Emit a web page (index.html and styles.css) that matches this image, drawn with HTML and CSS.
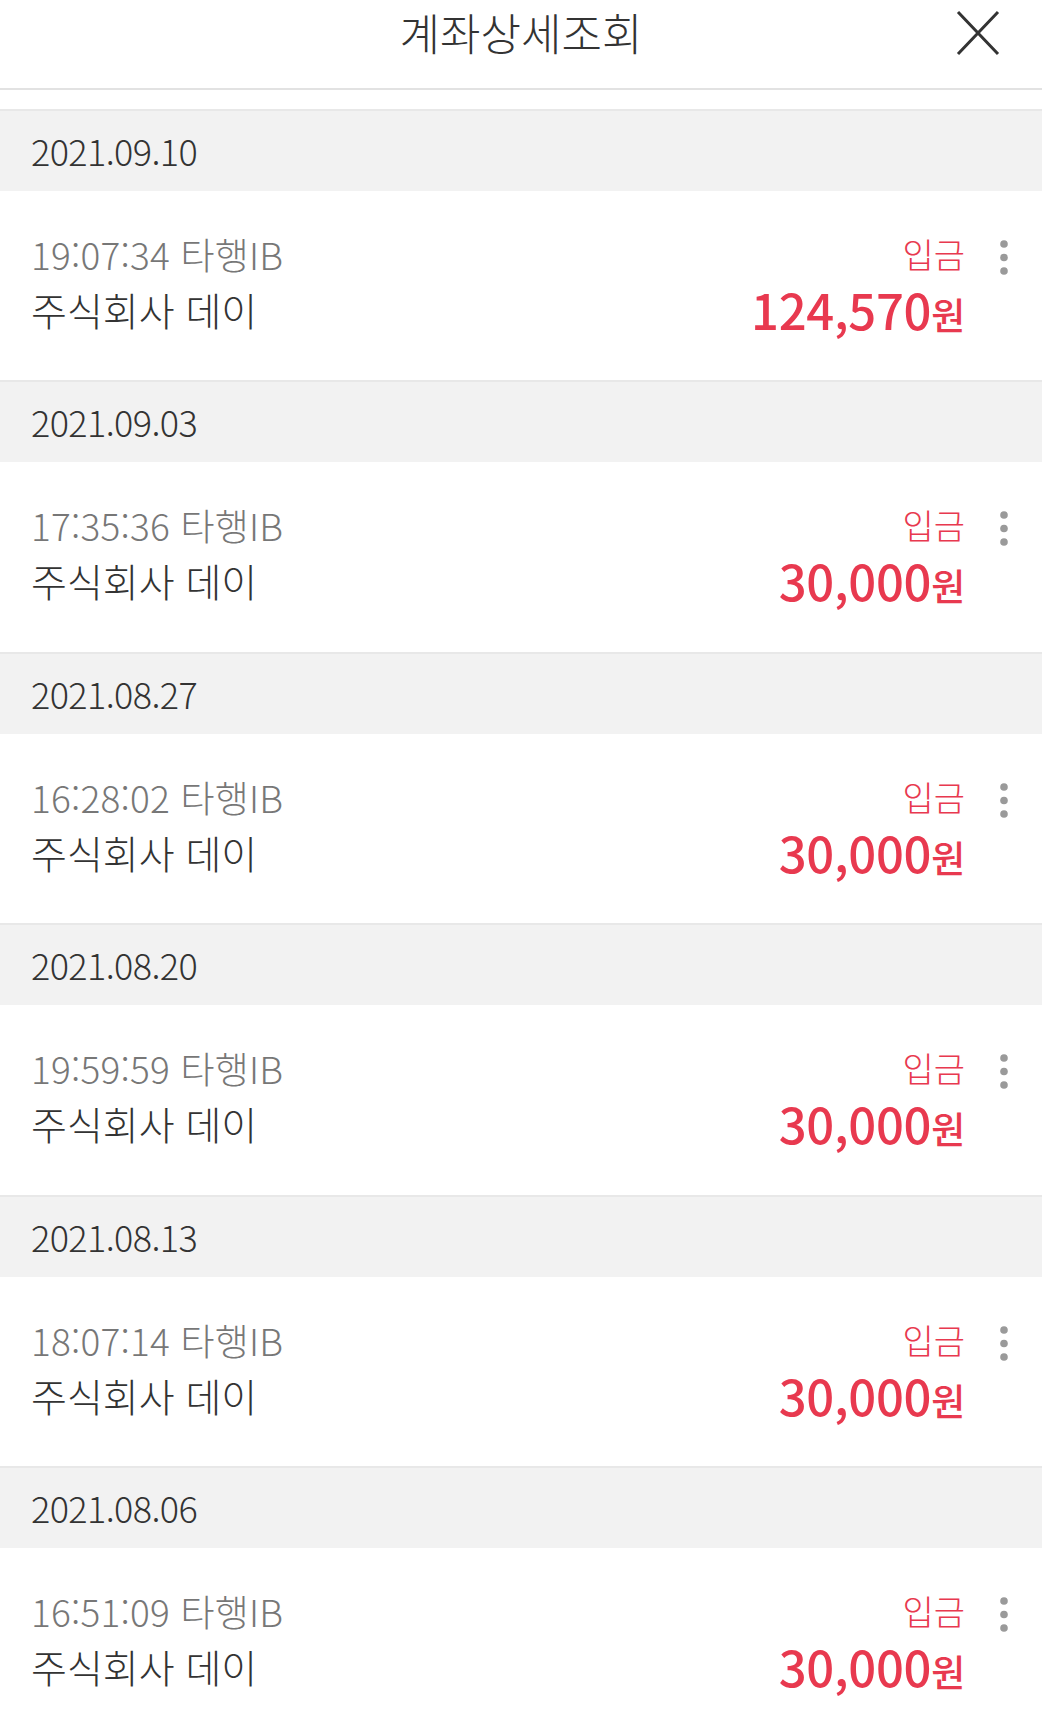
FILE: index.html
```html
<!DOCTYPE html>
<html lang="ko">
<head>
<meta charset="utf-8">
<title>계좌상세조회</title>
<link rel="stylesheet" href="styles.css">
</head>
<body>
<div class="page">
  <header class="header">
    <div></div>
    <h1 class="title">계좌상세조회</h1>
    <button class="close" aria-label="닫기">
      <svg width="44" height="46" viewBox="0 0 44 46"><path d="M2 2 L42 44 M42 2 L2 44" stroke="#333" stroke-width="3" fill="none"/></svg>
    </button>
  </header>
  <div class="spacer"></div>
  <ul class="list">
    <li class="group">
      <div class="date">2021.09.10</div>
      <div class="row">
        <div class="info"><div class="time">19:07:34 타행IB</div><div class="name">주식회사 데이</div></div>
        <div class="money"><div class="type">입금</div><div class="amount">124,570<span class="won">원</span></div></div>
        <div class="more"><svg width="8" height="36" viewBox="0 0 8 36"><circle cx="4" cy="4" r="3.8"/><circle cx="4" cy="17.5" r="3.8"/><circle cx="4" cy="31" r="3.8"/></svg></div>
      </div>
    </li>
    <li class="group">
      <div class="date">2021.09.03</div>
      <div class="row">
        <div class="info"><div class="time">17:35:36 타행IB</div><div class="name">주식회사 데이</div></div>
        <div class="money"><div class="type">입금</div><div class="amount">30,000<span class="won">원</span></div></div>
        <div class="more"><svg width="8" height="36" viewBox="0 0 8 36"><circle cx="4" cy="4" r="3.8"/><circle cx="4" cy="17.5" r="3.8"/><circle cx="4" cy="31" r="3.8"/></svg></div>
      </div>
    </li>
    <li class="group">
      <div class="date">2021.08.27</div>
      <div class="row">
        <div class="info"><div class="time">16:28:02 타행IB</div><div class="name">주식회사 데이</div></div>
        <div class="money"><div class="type">입금</div><div class="amount">30,000<span class="won">원</span></div></div>
        <div class="more"><svg width="8" height="36" viewBox="0 0 8 36"><circle cx="4" cy="4" r="3.8"/><circle cx="4" cy="17.5" r="3.8"/><circle cx="4" cy="31" r="3.8"/></svg></div>
      </div>
    </li>
    <li class="group">
      <div class="date">2021.08.20</div>
      <div class="row">
        <div class="info"><div class="time">19:59:59 타행IB</div><div class="name">주식회사 데이</div></div>
        <div class="money"><div class="type">입금</div><div class="amount">30,000<span class="won">원</span></div></div>
        <div class="more"><svg width="8" height="36" viewBox="0 0 8 36"><circle cx="4" cy="4" r="3.8"/><circle cx="4" cy="17.5" r="3.8"/><circle cx="4" cy="31" r="3.8"/></svg></div>
      </div>
    </li>
    <li class="group">
      <div class="date">2021.08.13</div>
      <div class="row">
        <div class="info"><div class="time">18:07:14 타행IB</div><div class="name">주식회사 데이</div></div>
        <div class="money"><div class="type">입금</div><div class="amount">30,000<span class="won">원</span></div></div>
        <div class="more"><svg width="8" height="36" viewBox="0 0 8 36"><circle cx="4" cy="4" r="3.8"/><circle cx="4" cy="17.5" r="3.8"/><circle cx="4" cy="31" r="3.8"/></svg></div>
      </div>
    </li>
    <li class="group">
      <div class="date">2021.08.06</div>
      <div class="row">
        <div class="info"><div class="time">16:51:09 타행IB</div><div class="name">주식회사 데이</div></div>
        <div class="money"><div class="type">입금</div><div class="amount">30,000<span class="won">원</span></div></div>
        <div class="more"><svg width="8" height="36" viewBox="0 0 8 36"><circle cx="4" cy="4" r="3.8"/><circle cx="4" cy="17.5" r="3.8"/><circle cx="4" cy="31" r="3.8"/></svg></div>
      </div>
    </li>
  </ul>
</div>
</body>
</html>
```

FILE: styles.css
```css
* { box-sizing: border-box; }
html, body { margin: 0; padding: 0; background: #fff; }
body {
  font-family: "Noto Sans CJK KR", "Noto Sans", sans-serif;
  font-weight: 300;
  color: #333;
  width: 1042px;
  height: 1736px;
  overflow: hidden;
}
.header {
  height: 90px;
  border-bottom: 2px solid #e2e2e2;
  display: grid;
  grid-template-columns: 1fr auto 1fr;
  align-items: start;
}
.title {
  margin: 0;
  font-size: 44px;
  font-weight: 300;
  line-height: 64px;
  color: #333;
  letter-spacing: 0;
}
.close {
  justify-self: end;
  margin: 10px 42px 0 0;
  padding: 0;
  border: 0;
  background: none;
  width: 44px;
  height: 46px;
  display: block;
}
.close svg { display: block; }
.spacer { height: 19px; }
.list { list-style: none; margin: 0; padding: 0; }
.date {
  height: 82px;
  border-top: 2px solid #e8e8e8;
  background: #f2f2f2;
  padding-left: 31px;
  font-size: 36px;
  letter-spacing: -0.6px;
  line-height: 78px;
  color: #333;
}
.row {
  height: 189.4px;
  display: flex;
  align-items: flex-start;
  padding: 36px 0 0 31px;
}
.info { flex: 1; }
.time {
  font-size: 37px;
  line-height: 54px;
  color: #777;
  letter-spacing: 0.2px;
}
.name {
  font-size: 39px;
  line-height: 56px;
  color: #333;
}
.money { text-align: right; color: #e8394f; }
.type {
  font-size: 34px;
  line-height: 54px;
}
.amount {
  font-size: 49px;
  font-weight: 500;
  line-height: 56px;
  letter-spacing: -0.3px;
}
.won { font-size: 37px; font-weight: 500; }
.more {
  width: 8px;
  margin: 13px 34px 0 35px;
  fill: #9a9a9a;
}
.more svg { display: block; }
```
